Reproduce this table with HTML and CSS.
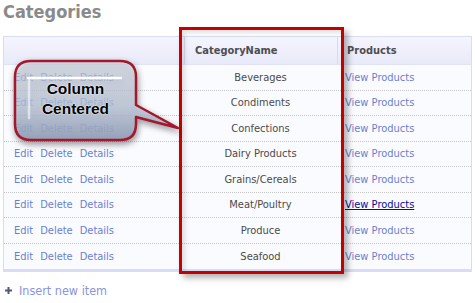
FILE: index.html
```html
<!DOCTYPE html>
<html>
<head>
<meta charset="utf-8">
<link rel="stylesheet" href="styles.css">
</head>
<body>
<div class="page">
  <h1 class="title">Categories</h1>
  <div class="grid">
    <div class="hrow">
      <div class="hcell c1"></div>
      <div class="hcell c2">CategoryName</div>
      <div class="hcell c3">Products</div>
    </div>
    <div class="row"><div class="cmds"><a>Edit</a><a>Delete</a><a>Details</a></div><div class="name">Beverages</div><div class="prod"><a>View Products</a></div></div>
    <div class="row"><div class="cmds"><a>Edit</a><a>Delete</a><a>Details</a></div><div class="name">Condiments</div><div class="prod"><a>View Products</a></div></div>
    <div class="row"><div class="cmds"><a>Edit</a><a>Delete</a><a>Details</a></div><div class="name">Confections</div><div class="prod"><a>View Products</a></div></div>
    <div class="row"><div class="cmds"><a>Edit</a><a>Delete</a><a>Details</a></div><div class="name">Dairy Products</div><div class="prod"><a>View Products</a></div></div>
    <div class="row"><div class="cmds"><a>Edit</a><a>Delete</a><a>Details</a></div><div class="name">Grains/Cereals</div><div class="prod"><a>View Products</a></div></div>
    <div class="row"><div class="cmds"><a>Edit</a><a>Delete</a><a>Details</a></div><div class="name">Meat/Poultry</div><div class="prod"><a class="hover">View Products</a></div></div>
    <div class="row"><div class="cmds"><a>Edit</a><a>Delete</a><a>Details</a></div><div class="name">Produce</div><div class="prod"><a>View Products</a></div></div>
    <div class="row last"><div class="cmds"><a>Edit</a><a>Delete</a><a>Details</a></div><div class="name">Seafood</div><div class="prod"><a>View Products</a></div></div>
  </div>
  <div class="insert">
    <svg class="plus" width="7" height="7" viewBox="0 0 7 7"><rect x="2.5" y="0" width="2" height="7" fill="#4f5a78"/><rect x="0" y="2.5" width="7" height="2" fill="#4f5a78"/></svg>
    <a>Insert new item</a>
  </div>

  <div class="redbox"></div>

  <div class="callout">
    <svg width="190" height="150" viewBox="0 0 190 150">
      <defs>
        <linearGradient id="cf" x1="0" y1="0" x2="0" y2="1">
          <stop offset="0" stop-color="#dfe7f3" stop-opacity="0.55"/>
          <stop offset="0.55" stop-color="#c6d2e6" stop-opacity="0.72"/>
          <stop offset="1" stop-color="#93a1bb" stop-opacity="0.9"/>
        </linearGradient>
      </defs>
      <path d="M31,61 H120 Q136,61 136,77 V105 L178,128 L136,117 V124 Q136,140 120,140 H31 Q15,140 15,124 V77 Q15,61 31,61 Z" fill="url(#cf)" stroke="#a3182c" stroke-width="2.5" stroke-linejoin="round"/>
      <path d="M28,78 H121" stroke="#ffffff" stroke-width="2.5" stroke-linecap="round" opacity="0.95"/>
      <path d="M29,78 V118" stroke="#ffffff" stroke-width="2.5" stroke-linecap="round" opacity="0.55"/>
    </svg>
    <div class="callout-text">Column<br>Centered</div>
  </div>
</div>
</body>
</html>
```
FILE: styles.css
```css
html, body {
  margin: 0;
  padding: 0;
  background: #ffffff;
}
.page {
  position: relative;
  width: 475px;
  height: 303px;
  overflow: hidden;
  font-family: "DejaVu Sans Condensed", "DejaVu Sans", sans-serif;
  font-stretch: condensed;
}
.title {
  margin: 0 0 14px 0;
  padding: 1px 0 0 3px;
  font-size: 18px;
  line-height: 21px;
  font-weight: bold;
  color: #8a8a8a;
}
.grid {
  margin-left: 3px;
  width: 469px;
  box-sizing: border-box;
  border: 1px solid #d9dcf3;
  border-bottom: 3px solid #d8dcf7;
  background: #fafbff;
}
.hrow, .row {
  display: grid;
  grid-template-columns: 180px 153px 134px;
}
.hrow {
  height: 28px;
  background: linear-gradient(#f5f5fe, #e9eaf9);
  border-bottom: 1px solid #e2e4f6;
  box-sizing: border-box;
}
.hcell {
  display: flex;
  align-items: center;
  font-size: 11px;
  font-weight: bold;
  color: #4e4e4e;
}
.hcell.c2 {
  border-left: 1px solid #d6d9f0;
  padding-left: 10px;
}
.hcell.c3 {
  border-left: 1px solid #d6d9f0;
  padding-left: 9px;
}
.row {
  height: 25.5px;
  box-sizing: border-box;
  border-bottom: 1px dotted #c6c6c6;
  font-size: 11px;
}
.row.last {
  border-bottom: none;
}
.row > div {
  display: flex;
  align-items: center;
}
.cmds {
  padding-left: 10px;
  gap: 7px;
}
a {
  color: #6a7fcf;
  text-decoration: none;
}
a.hover {
  color: #0a0a9c;
  text-decoration: underline;
}
.name {
  justify-content: center;
  color: #4a4a4a;
}
.prod {
  padding-left: 8px;
}
.insert {
  display: flex;
  align-items: center;
  gap: 7px;
  margin-top: 11px;
  padding-left: 5px;
  height: 15px;
  font-size: 12.5px;
}
.insert a {
  color: #8a93e0;
}
.redbox {
  position: absolute;
  left: 179px;
  top: 27px;
  width: 165px;
  height: 247px;
  box-sizing: border-box;
  border: 3px solid #c40000;
  box-shadow: 4px 4px 6px rgba(0, 0, 0, 0.3), inset 3px 3px 5px rgba(0, 0, 0, 0.12);
}
.callout {
  position: absolute;
  left: 0;
  top: 0;
  width: 190px;
  height: 150px;
}
.callout svg {
  display: block;
  filter: drop-shadow(1px 3px 3px rgba(0, 0, 0, 0.45));
}
.callout-text {
  position: absolute;
  left: 15px;
  width: 121px;
  top: 79px;
  text-align: center;
  font-family: "Liberation Sans", Arial, sans-serif;
  font-stretch: normal;
  font-weight: bold;
  font-size: 15.5px;
  line-height: 20px;
  color: #000000;
  text-shadow: 0 0 2px #ffffff, 0 0 1px #ffffff;
}
```
